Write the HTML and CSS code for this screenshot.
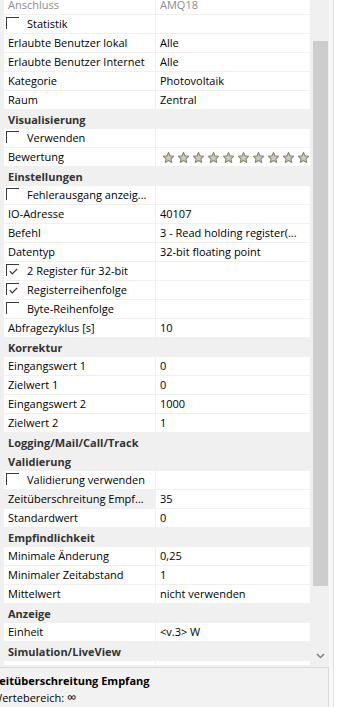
FILE: index.html
```html
<!DOCTYPE html>
<html lang="de">
<head>
<meta charset="utf-8">
<title>Eigenschaften</title>
<link rel="stylesheet" href="styles.css">
</head>
<body>
<div class="window">
  <div class="main">
    <div class="gridarea">
      <div class="grid">
        <div class="rows">
          <div class="row ro"><div class="lab">Anschluss</div><div class="val">AMQ18</div></div>
          <div class="row"><div class="lab"><span class="cb"></span><span class="cbt">Statistik</span></div><div class="val"></div></div>
          <div class="row"><div class="lab">Erlaubte Benutzer lokal</div><div class="val">Alle</div></div>
          <div class="row"><div class="lab">Erlaubte Benutzer Internet</div><div class="val">Alle</div></div>
          <div class="row"><div class="lab">Kategorie</div><div class="val">Photovoltaik</div></div>
          <div class="row"><div class="lab">Raum</div><div class="val">Zentral</div></div>
          <div class="cat">Visualisierung</div>
          <div class="row"><div class="lab"><span class="cb"></span><span class="cbt">Verwenden</span></div><div class="val"></div></div>
          <div class="row"><div class="lab">Bewertung</div><div class="val stars">
            <svg class="star" viewBox="0 0 11 11"><polygon points="5.5,0.5 7.03,3.9 10.73,4.3 7.97,6.8 8.73,10.45 5.5,8.6 2.27,10.45 3.03,6.8 0.27,4.3 3.97,3.9"/></svg>
            <svg class="star" viewBox="0 0 11 11"><polygon points="5.5,0.5 7.03,3.9 10.73,4.3 7.97,6.8 8.73,10.45 5.5,8.6 2.27,10.45 3.03,6.8 0.27,4.3 3.97,3.9"/></svg>
            <svg class="star" viewBox="0 0 11 11"><polygon points="5.5,0.5 7.03,3.9 10.73,4.3 7.97,6.8 8.73,10.45 5.5,8.6 2.27,10.45 3.03,6.8 0.27,4.3 3.97,3.9"/></svg>
            <svg class="star" viewBox="0 0 11 11"><polygon points="5.5,0.5 7.03,3.9 10.73,4.3 7.97,6.8 8.73,10.45 5.5,8.6 2.27,10.45 3.03,6.8 0.27,4.3 3.97,3.9"/></svg>
            <svg class="star" viewBox="0 0 11 11"><polygon points="5.5,0.5 7.03,3.9 10.73,4.3 7.97,6.8 8.73,10.45 5.5,8.6 2.27,10.45 3.03,6.8 0.27,4.3 3.97,3.9"/></svg>
            <svg class="star" viewBox="0 0 11 11"><polygon points="5.5,0.5 7.03,3.9 10.73,4.3 7.97,6.8 8.73,10.45 5.5,8.6 2.27,10.45 3.03,6.8 0.27,4.3 3.97,3.9"/></svg>
            <svg class="star" viewBox="0 0 11 11"><polygon points="5.5,0.5 7.03,3.9 10.73,4.3 7.97,6.8 8.73,10.45 5.5,8.6 2.27,10.45 3.03,6.8 0.27,4.3 3.97,3.9"/></svg>
            <svg class="star" viewBox="0 0 11 11"><polygon points="5.5,0.5 7.03,3.9 10.73,4.3 7.97,6.8 8.73,10.45 5.5,8.6 2.27,10.45 3.03,6.8 0.27,4.3 3.97,3.9"/></svg>
            <svg class="star" viewBox="0 0 11 11"><polygon points="5.5,0.5 7.03,3.9 10.73,4.3 7.97,6.8 8.73,10.45 5.5,8.6 2.27,10.45 3.03,6.8 0.27,4.3 3.97,3.9"/></svg>
            <svg class="star" viewBox="0 0 11 11"><polygon points="5.5,0.5 7.03,3.9 10.73,4.3 7.97,6.8 8.73,10.45 5.5,8.6 2.27,10.45 3.03,6.8 0.27,4.3 3.97,3.9"/></svg>
          </div></div>
          <div class="cat">Einstellungen</div>
          <div class="row"><div class="lab"><span class="cb"></span><span class="cbt">Fehlerausgang anzeig...</span></div><div class="val"></div></div>
          <div class="row"><div class="lab">IO-Adresse</div><div class="val">40107</div></div>
          <div class="row"><div class="lab">Befehl</div><div class="val">3 - Read holding register(...</div></div>
          <div class="row"><div class="lab">Datentyp</div><div class="val">32-bit floating point</div></div>
          <div class="row"><div class="lab"><span class="cb"><svg class="tick" viewBox="0 0 9 7"><polyline points="0.8,3.2 3.3,5.8 8.2,0.8"/></svg></span><span class="cbt">2 Register für 32-bit</span></div><div class="val"></div></div>
          <div class="row"><div class="lab"><span class="cb"><svg class="tick" viewBox="0 0 9 7"><polyline points="0.8,3.2 3.3,5.8 8.2,0.8"/></svg></span><span class="cbt">Registerreihenfolge</span></div><div class="val"></div></div>
          <div class="row"><div class="lab"><span class="cb"></span><span class="cbt">Byte-Reihenfolge</span></div><div class="val"></div></div>
          <div class="row"><div class="lab">Abfragezyklus [s]</div><div class="val">10</div></div>
          <div class="cat">Korrektur</div>
          <div class="row"><div class="lab">Eingangswert 1</div><div class="val">0</div></div>
          <div class="row"><div class="lab">Zielwert 1</div><div class="val">0</div></div>
          <div class="row"><div class="lab">Eingangswert 2</div><div class="val">1000</div></div>
          <div class="row"><div class="lab">Zielwert 2</div><div class="val">1</div></div>
          <div class="cat">Logging/Mail/Call/Track</div>
          <div class="cat">Validierung</div>
          <div class="row"><div class="lab"><span class="cb"></span><span class="cbt">Validierung verwenden</span></div><div class="val"></div></div>
          <div class="row sel"><div class="lab">Zeitüberschreitung Empf...</div><div class="val">35</div></div>
          <div class="row"><div class="lab">Standardwert</div><div class="val">0</div></div>
          <div class="cat">Empfindlichkeit</div>
          <div class="row"><div class="lab">Minimale Änderung</div><div class="val">0,25</div></div>
          <div class="row"><div class="lab">Minimaler Zeitabstand</div><div class="val">1</div></div>
          <div class="row"><div class="lab">Mittelwert</div><div class="val">nicht verwenden</div></div>
          <div class="cat">Anzeige</div>
          <div class="row"><div class="lab">Einheit</div><div class="val">&lt;v.3&gt; W</div></div>
          <div class="cat">Simulation/LiveView</div>
          <div class="row"><div class="lab"></div><div class="val"></div></div>
        </div>
      </div>
      <div class="vscroll">
        <div class="thumb"></div>
        <div class="arrow"><svg viewBox="0 0 9 6" class="chev"><polyline points="1,1 4.5,4.5 8,1"/></svg></div>
      </div>
    </div>
    <div class="desc">
      <div class="desc-inner">
        <div class="desc-title">Zeitüberschreitung Empfang</div>
        <div class="desc-text">Wertebereich: <span class="inf">∞</span></div>
      </div>
    </div>
  </div>
  <div class="edge"></div>
</div>
</body>
</html>
```
FILE: styles.css
```css
html, body {
  margin: 0;
  padding: 0;
  background: #ffffff;
}
body {
  font-family: "Open Sans", "Noto Sans", sans-serif;
  font-size: 11px;
  color: #000000;
  width: 340px;
  height: 707px;
  overflow: hidden;
}
.window {
  display: flex;
  width: 340px;
  height: 707px;
}
.main {
  width: 329px;
  display: flex;
  flex-direction: column;
  background: #f0f0f0;
}
.edge {
  width: 4px;
  background: #f7f7f7;
  border-right: 1px solid #e2e2e2;
}
.gridarea {
  height: 665px;
  display: flex;
  overflow: hidden;
}
.grid {
  width: 311px;
  background: #f0f0f0;
  overflow: hidden;
}
.rows {
  margin-top: -4px;
}
.row {
  display: flex;
  height: 18px;
  border-bottom: 1px solid #f0f0f0;
  padding-left: 4px;
  line-height: 18px;
  white-space: nowrap;
}
.lab {
  width: 152px;
  background: #ffffff;
  border-right: 1px solid #f0f0f0;
  padding-left: 4px;
  box-sizing: border-box;
  display: flex;
  align-items: center;
  overflow: hidden;
}
.val {
  width: 154px;
  background: #ffffff;
  padding-left: 4px;
  box-sizing: border-box;
  overflow: hidden;
}
.ro .lab, .ro .val {
  color: #8c8c8c;
}
.sel .lab {
  background: #f0f0f0;
}
.cat {
  height: 19px;
  line-height: 19px;
  padding-left: 8px;
  font-weight: 700;
  color: #333333;
  white-space: nowrap;
}
.cb {
  width: 13px;
  height: 12px;
  border-top: 1px solid #3a3a3a;
  border-left: 1px solid #3a3a3a;
  margin-left: -2px;
  margin-top: -2px;
  box-sizing: border-box;
  display: flex;
  align-items: center;
  justify-content: center;
}
.cbt {
  margin-left: 8px;
}
.tick {
  width: 9px;
  height: 7px;
  fill: none;
  stroke: #333333;
  stroke-width: 1.2;
  margin-top: 1px;
}
.stars {
  display: flex;
  align-items: center;
  gap: 4px;
  padding-left: 7px;
}
.star {
  width: 11px;
  height: 11px;
  flex: none;
  fill: #cfcabb;
  stroke: #8d8774;
  stroke-width: 1.1;
  stroke-linejoin: round;
  margin-top: 1px;
}
.vscroll {
  width: 18px;
  display: flex;
  flex-direction: column;
  align-items: center;
  background: #f0f0f0;
}
.thumb {
  width: 15px;
  height: 545px;
  margin-top: 41px;
  background: #cdcdcd;
}
.arrow {
  margin-top: 67px;
  height: 8px;
  display: flex;
}
.chev {
  width: 9px;
  height: 6px;
  fill: none;
  stroke: #7e7e7e;
  stroke-width: 1.5;
}
.desc {
  margin-top: 2px;
  flex: 1;
  border-top: 1px solid #d9d9d9;
  border-right: 1px solid #d9d9d9;
  background: #f2f2f2;
  overflow: hidden;
}
.desc-inner {
  margin-left: -7px;
  padding-top: 4px;
  white-space: nowrap;
}
.desc-title {
  font-weight: 700;
  line-height: 17px;
}
.desc-text {
  line-height: 17px;
  margin-left: -1px;
}
.inf {
  font-size: 13px;
}
```
